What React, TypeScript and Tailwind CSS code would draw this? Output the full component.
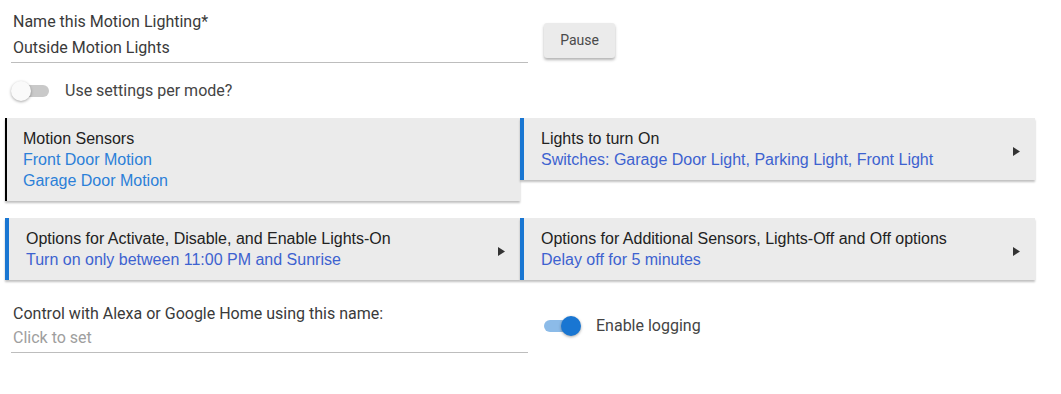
import React from 'react';

type Section = {
  title: string;
  lines: string[];
  accent: 'black' | 'blue';
  arrow: boolean;
  linkColor: string;
};

const sections: Section[] = [
  {
    title: 'Motion Sensors',
    lines: ['Front Door Motion', 'Garage Door Motion'],
    accent: 'black',
    arrow: false,
    linkColor: 'text-[#2b80d8]',
  },
  {
    title: 'Lights to turn On',
    lines: ['Switches: Garage Door Light, Parking Light, Front Light'],
    accent: 'blue',
    arrow: true,
    linkColor: 'text-[#3d62d0]',
  },
  {
    title: 'Options for Activate, Disable, and Enable Lights-On',
    lines: ['Turn on only between 11:00 PM and Sunrise'],
    accent: 'blue',
    arrow: true,
    linkColor: 'text-[#3d62d0]',
  },
  {
    title: 'Options for Additional Sensors, Lights-Off and Off options',
    lines: ['Delay off for 5 minutes'],
    accent: 'blue',
    arrow: true,
    linkColor: 'text-[#3d62d0]',
  },
];

function Arrow() {
  return (
    <svg width="7" height="9" viewBox="0 0 7 9" className="shrink-0 mt-[4px]">
      <polygon points="0,0 7,4.5 0,9" fill="#333" />
    </svg>
  );
}

function SectionCard({ s }: { s: Section }) {
  return (
    <div
      className={`flex items-center bg-[#ebebeb] shadow-[0_2px_2px_rgba(0,0,0,0.25)] py-[10px] pr-[15px] font-['Liberation_Sans',Arial,sans-serif] text-[16px] leading-[21px] ${
        s.accent === 'black' ? 'border-l-2 border-black pl-[16px]' : 'border-l-4 border-[#1976d2] pl-[17px]'
      }`}
    >
      <div className="flex-1">
        <div className="text-[#222]">{s.title}</div>
        {s.lines.map((l) => (
          <div key={l} className={s.linkColor}>
            {l}
          </div>
        ))}
      </div>
      {s.arrow && <Arrow />}
    </div>
  );
}

function Toggle({ on }: { on: boolean }) {
  return (
    <div className="relative w-[40px] h-[22px] shrink-0">
      <div
        className={`absolute left-[3px] top-[5px] w-[35px] h-[12px] rounded-full ${
          on ? 'bg-[#8cbbe8]' : 'bg-[#c9c9c9]'
        }`}
      />
      <div
        className={`absolute top-[1px] w-[20px] h-[20px] rounded-full shadow-[0_1px_3px_rgba(0,0,0,0.35)] ${
          on ? 'left-[20px] bg-[#1976d2]' : 'left-0 bg-[#fafafa]'
        }`}
      />
    </div>
  );
}

export default function App() {
  return (
    <div className="w-[1061px] h-[394px] bg-white font-['Roboto',sans-serif] text-[16px] text-[#3a3a3a] overflow-hidden">
      <div className="flex pl-[11px] pt-[12px]">
        <div className="w-[517px]">
          <div className="pl-[2px] h-[20px] leading-[20px]">Name this Motion Lighting*</div>
          <div className="mt-[4px] pl-[2px] h-[27px] leading-[24px] border-b border-[#bdbdbd]">
            Outside Motion Lights
          </div>
        </div>
        <button className="ml-[16px] mt-[11px] w-[71px] h-[35px] rounded-[3px] bg-[#ebebeb] text-[14px] text-[#4a4a4a] shadow-[0_2px_3px_rgba(0,0,0,0.3)]">
          Pause
        </button>
      </div>

      <div className="flex items-center pl-[11px] mt-[17px] h-[22px]">
        <Toggle on={false} />
        <span className="ml-[14px] text-[#444]">Use settings per mode?</span>
      </div>

      <div className="grid grid-cols-[515px_515px] items-start pl-[5px] mt-[16px]">
        <SectionCard s={sections[0]} />
        <SectionCard s={sections[1]} />
      </div>
      <div className="grid grid-cols-[515px_515px] items-start pl-[5px] mt-[17px]">
        <SectionCard s={sections[2]} />
        <SectionCard s={sections[3]} />
      </div>

      <div className="flex pl-[11px] mt-[24px]">
        <div className="w-[517px]">
          <div className="pl-[2px] h-[20px] leading-[20px]">Control with Alexa or Google Home using this name:</div>
          <div className="mt-[2px] pl-[2px] h-[27px] leading-[24px] border-b border-[#bdbdbd] text-[#9e9e9e]">
            Click to set
          </div>
        </div>
        <div className="flex items-center ml-[13px] mt-[11px] h-[22px]">
          <Toggle on={true} />
          <span className="ml-[15px] text-[#444]">Enable logging</span>
        </div>
      </div>
    </div>
  );
}
